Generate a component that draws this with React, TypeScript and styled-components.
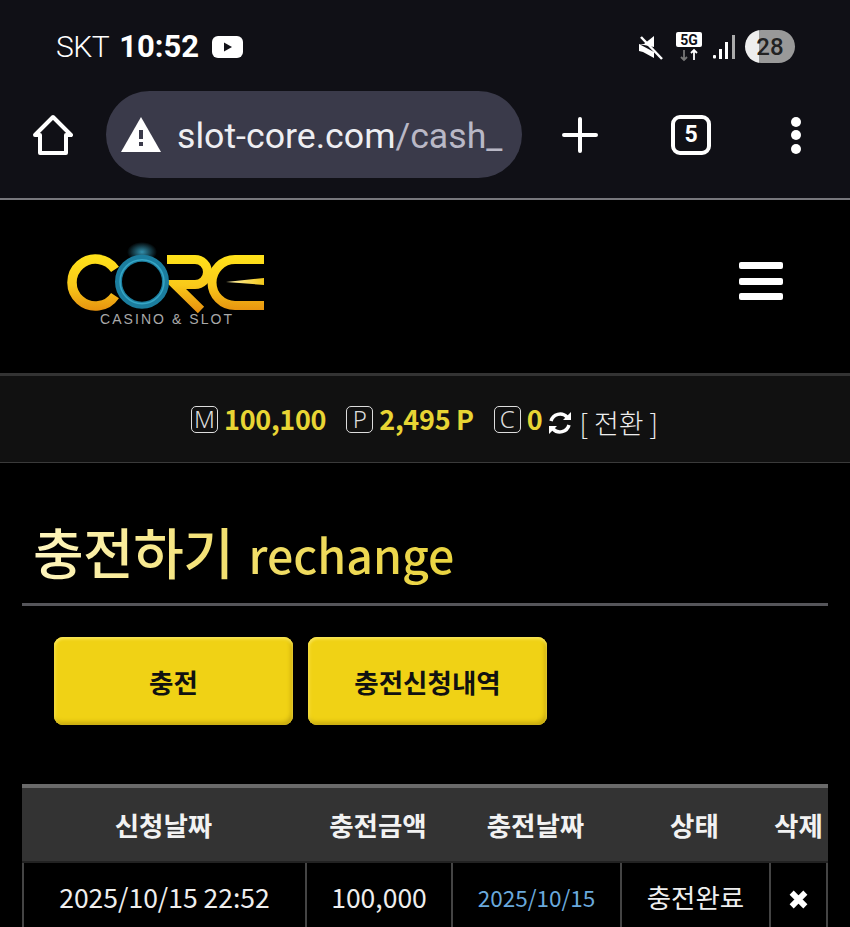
import React from 'react';
import styled, {createGlobalStyle} from 'styled-components';

const GlobalStyle = createGlobalStyle`
  html, body {
    margin: 0;
    padding: 0;
    background: #000;
  }
  body {
    font-family: "Noto Sans CJK KR", "Noto Sans", sans-serif;
  }
`;

const Page = styled.div`
  width: 850px;
  height: 927px;
  overflow: hidden;
  background: #000;
  color: #fff;
`;

const Chrome = styled.div`
  height: 198px;
  background: #101016;
  border-bottom: 2px solid #77777c;
`;

const StatusBar = styled.div`
  height: 91px;
  box-sizing: border-box;
  padding: 2px 55px 0 56px;
  display: flex;
  align-items: center;
  font-family: Roboto, sans-serif;
`;

const Carrier = styled.span`
  font-size: 30px;
  font-weight: 300;
  letter-spacing: -0.5px;
  margin-right: 10px;
`;

const Clock = styled.span`
  font-size: 31px;
  font-weight: 700;
  margin-right: 13px;
`;

const StatusRight = styled.div`
  margin-left: auto;
  display: flex;
  align-items: center;
`;

const Battery = styled.span`
  width: 50px;
  height: 33px;
  margin-left: 10px;
  border-radius: 17px;
  background: linear-gradient(90deg, #eee 0 29%, #999 29% 100%);
  color: #222;
  font-size: 24px;
  font-weight: 500;
  display: flex;
  align-items: center;
  justify-content: center;
  box-sizing: border-box;
`;

const Toolbar = styled.div`
  height: 87px;
  padding: 0 33px;
  display: flex;
  align-items: center;
`;

const UrlPill = styled.div`
  width: 416px;
  height: 87px;
  margin: 0 40px 0 33px;
  box-sizing: border-box;
  padding: 0 15px;
  border-radius: 44px;
  background: #3a3a4a;
  display: flex;
  align-items: center;
  gap: 16px;
  font-family: Roboto, sans-serif;
  font-size: 35.7px;
  color: #eeeef2;
  white-space: nowrap;
  overflow: hidden;
`;

const UrlText = styled.span`
  padding-top: 3px;
`;

const UrlDim = styled.span`
  color: #b9b8c6;
`;

const TabCount = styled.span`
  width: 40px;
  height: 40px;
  margin-left: 73px;
  box-sizing: border-box;
  border: 4px solid #fff;
  border-radius: 9px;
  display: flex;
  align-items: center;
  justify-content: center;
  font-family: Roboto, sans-serif;
  font-size: 23px;
  font-weight: 700;
`;

const MenuDots = styled.span`
  margin: 1px 0 0 80px;
  display: flex;
  flex-direction: column;
  gap: 3.500px;
  i {
    width: 10px;
    height: 10px;
    border-radius: 50%;
    background: #fff;
  }
`;

const SiteHeader = styled.header`
  height: 173px;
  box-sizing: border-box;
  padding: 40px 67px 0 60px;
  display: flex;
  justify-content: space-between;
`;

const Logo = styled.div`
  width: 220px;
  height: 92px;
  position: relative;
`;

const LogoCaption = styled.span`
  position: absolute;
  left: 40px;
  top: 71px;
  font-family: "Liberation Sans", sans-serif;
  font-size: 14px;
  line-height: 17px;
  letter-spacing: 2.050px;
  color: #a9a9a9;
  white-space: nowrap;
`;

const Hamburger = styled.div`
  width: 44px;
  margin-top: 22px;
  height: 38px;
  display: flex;
  flex-direction: column;
  justify-content: space-between;
  i {
    height: 7px;
    border-radius: 2px;
    background: #fff;
  }
`;

const InfoBar = styled.div`
  height: 90px;
  box-sizing: border-box;
  background: #111;
  border-top: 3px solid #333;
  border-bottom: 1px solid #3a3a3a;
  padding: 0 0 0 191px;
  display: flex;
  align-items: center;
`;

const Badge = styled.span`
  width: 27px;
  height: 27px;
  box-sizing: border-box;
  border: 1px solid #ddd;
  border-radius: 5px;
  display: flex;
  align-items: center;
  justify-content: center;
  margin: 0 6px 0 0;
  font-family: "Noto Sans", sans-serif;
  font-size: 24px;
  line-height: 1;
  font-weight: 300;
  color: #ddd;
`;

const Amount = styled.span<{$gap: number}>`
  color: #e8d534;
  font-size: 27px;
  font-weight: 700;
  line-height: 1;
  margin: -2px ${p => p.$gap}px 0 0;
  letter-spacing: -0.3px;
`;

const SwitchLabel = styled.span`
  margin: 6px 0 0 7px;
  font-size: 27px;
  font-weight: 300;
  line-height: 1;
  color: #eee;
  white-space: pre;
`;

const Main = styled.main`
  padding: 0 22px;
`;

const TitleRow = styled.h1`
  margin: 0;
  height: 143px;
  box-sizing: border-box;
  padding: 52px 0 0 11px;
  border-bottom: 3px solid #55555a;
  font-weight: 400;
  line-height: 1.3;
  white-space: nowrap;
`;

const TitleText = styled.span`
  display: inline-block;
  background: linear-gradient(90deg, #fff6c0 0%, #f3e070 45%, #e9d33f 100%);
  -webkit-background-clip: text;
  background-clip: text;
  color: transparent;
`;

const TitleKo = styled.span`
  font-size: 55px;
  font-weight: 500;
  letter-spacing: -0.5px;
`;

const TitleEn = styled.span`
  margin-left: 15px;
  font-size: 46.500px;
  font-weight: 500;
`;

const ButtonRow = styled.div`
  padding: 31px 32px 0;
  display: flex;
  gap: 15px;
`;

const ActionButton = styled.button`
  width: 239px;
  height: 88px;
  padding: 0;
  border: none;
  border-radius: 9px;
  background: #f0d215;
  box-shadow: inset 0 2px 3px #f9e65a, inset -2px -3px 4px #c6a90f, inset 2px 0 3px #f5dc35;
  color: #111;
  font-family: inherit;
  font-size: 26.500px;
  font-weight: 700;
`;

const RechargeTable = styled.table`
  width: 806px;
  margin-top: 59px;
  border-collapse: separate;
  border-spacing: 0;
  table-layout: fixed;
  border-top: 4px solid #6a6a6a;
`;

const HeadCell = styled.th`
  height: 73px;
  padding: 0;
  background: #333;
  border-bottom: 2px solid #222;
  font-size: 26.500px;
  font-weight: 700;
  color: #f2f2f2;
  white-space: nowrap;
`;

const BodyCell = styled.td<{$tone?: string; $size?: number}>`
  height: 72px;
  box-sizing: border-box;
  padding: 15px 0 0;
  vertical-align: top;
  text-align: center;
  font-size: ${p => p.$size || 26.5}px;
  line-height: 38px;
  font-weight: 400;
  color: ${p => p.$tone || '#eee'};
  border-left: 2px solid #444;
  white-space: nowrap;
  &:last-child {
    border-right: 2px solid #444;
  }
`;

const columns = [
    {title: '신청날짜', width: 283},
    {title: '충전금액', width: 146},
    {title: '충전날짜', width: 169},
    {title: '상태', width: 149},
    {title: '삭제', width: 59},
];

const HomeIcon = () => (
    <svg width="40" height="42" viewBox="0 0 40 42" fill="none" stroke="#fff" strokeWidth="4" strokeLinejoin="round">
        <path d="M2 21 20 3l18 18h-5v18H7V21z"/>
    </svg>
);

const WarnIcon = () => (
    <svg width="40" height="35" viewBox="0 0 40 35" style={{flexShrink: 0}}>
        <path d="M20 0 40 35H0z" fill="#fff"/>
        <rect x="18" y="13" width="4" height="9" fill="#3a3a4a"/>
        <rect x="18" y="25" width="4" height="4" fill="#3a3a4a"/>
    </svg>
);

const LogoMark = () => (
    <svg width="220" height="92" viewBox="0 0 220 92" fill="none">
        <defs>
            <linearGradient id="gold" gradientUnits="userSpaceOnUse" x1="0" y1="15" x2="0" y2="70">
                <stop offset="0" stopColor="#ffe21a"/>
                <stop offset="0.55" stopColor="#f8c91a"/>
                <stop offset="1" stopColor="#e8940f"/>
            </linearGradient>
            <linearGradient id="spike" x1="0" y1="0" x2="1" y2="0">
                <stop offset="0" stopColor="#fff3b0"/>
                <stop offset="1" stopColor="#f2c81a"/>
            </linearGradient>
            <radialGradient id="flare">
                <stop offset="0" stopColor="#3fb4d8" stopOpacity="0.8"/>
                <stop offset="1" stopColor="#3fb4d8" stopOpacity="0"/>
            </radialGradient>
        </defs>
        <ellipse cx="82" cy="12" rx="15" ry="10" fill="url(#flare)"/>
        <path d="M55 29.400A23.500 23.500 0 1 0 55 55.600" stroke="url(#gold)" strokeWidth="9.500"/>
        <path d="M107 19.500H135a12.500 12.500 0 0 1 0 25H115L141 70" stroke="url(#gold)" strokeWidth="9"/>
        <path d="M204 19.500H175a23 23 0 0 0 0 46H204" stroke="url(#gold)" strokeWidth="9"/>
        <path d="M204 38v7l-38-3z" fill="url(#spike)"/>
        <circle cx="82" cy="41.700" r="23.500" stroke="#1b7d9e" strokeWidth="7"/>
        <circle cx="82" cy="41.700" r="22" stroke="#36a6c6" strokeWidth="1.500"/>
    </svg>
);

const YoutubeIcon = () => (
    <svg width="31" height="22" viewBox="0 0 31 22">
        <rect width="31" height="22" rx="6" fill="#fff"/>
        <path d="M12 6.500 20 11l-8 4.500z" fill="#111118"/>
    </svg>
);

const MuteIcon = () => (
    <svg width="24" height="26" viewBox="0 0 24 26" fill="#fff" style={{marginRight: 13}}>
        <path d="M0 10h5l10-8v11zM0 10v7l4 1 11 6V18z"/>
        <path d="M2 3 23 25" stroke="#fff" strokeWidth="2.500"/>
    </svg>
);

const NetworkIcon = () => (
    <svg width="27" height="30" viewBox="0 0 27 30" style={{marginRight: 10}}>
        <rect width="26" height="15" rx="2" fill="#fff"/>
        <text x="13" y="12.500" textAnchor="middle" fontFamily="Roboto, sans-serif" fontWeight="700" fontSize="14" fill="#111118">5G</text>
        <path d="M8 18v10M5 25l3 3 3-3" stroke="#777" strokeWidth="1.800" fill="none"/>
        <path d="M18 28V18M15 21l3-3 3 3" stroke="#fff" strokeWidth="1.800" fill="none"/>
    </svg>
);

const SignalIcon = () => (
    <svg width="22" height="24" viewBox="0 0 22 24" fill="#fff">
        <rect x="0" y="20" width="3" height="3.500" rx="1"/>
        <rect x="6" y="14" width="3" height="10"/>
        <rect x="12" y="7" width="3" height="17"/>
        <rect x="19" y="0" width="3" height="24" fill="#aaa"/>
    </svg>
);

const PlusIcon = () => (
    <svg width="36" height="36" viewBox="0 0 36 36" stroke="#fff" strokeWidth="4" strokeLinecap="round">
        <path d="M18 2v32M2 18h32"/>
    </svg>
);

const RefreshIcon = () => (
    <svg width="24" height="24" viewBox="0 0 24 24" fill="none" stroke="#fff" strokeWidth="3.500" style={{marginTop: 8}}>
        <path d="M3 10a9.500 9.500 0 0 1 16-4"/>
        <path d="M21 14a9.500 9.500 0 0 1-16 4"/>
        <path d="M23 1v8h-8z" fill="#fff" stroke="none"/>
        <path d="M1 23v-8h8z" fill="#fff" stroke="none"/>
    </svg>
);

const CloseIcon = () => (
    <svg width="19" height="19" viewBox="0 0 18 18" stroke="#fff" strokeWidth="5.500" style={{display: 'block', margin: '12px auto 0'}}>
        <path d="M2.500 2.500l13 13M15.500 2.500l-13 13"/>
    </svg>
);

export default function App() {
    return (
        <Page>
            <GlobalStyle/>
            <Chrome>
                <StatusBar>
                    <Carrier>SKT</Carrier>
                    <Clock>10:52</Clock>
                    <YoutubeIcon/>
                    <StatusRight>
                        <MuteIcon/>
                        <NetworkIcon/>
                        <SignalIcon/>
                        <Battery>28</Battery>
                    </StatusRight>
                </StatusBar>
                <Toolbar>
                    <HomeIcon/>
                    <UrlPill>
                        <WarnIcon/>
                        <UrlText>slot-core.com<UrlDim>/cash_</UrlDim></UrlText>
                    </UrlPill>
                    <PlusIcon/>
                    <TabCount>5</TabCount>
                    <MenuDots><i/><i/><i/></MenuDots>
                </Toolbar>
            </Chrome>
            <SiteHeader>
                <Logo>
                    <LogoMark/>
                    <LogoCaption>CASINO &amp; SLOT</LogoCaption>
                </Logo>
                <Hamburger><i/><i/><i/></Hamburger>
            </SiteHeader>
            <InfoBar>
                <Badge>M</Badge>
                <Amount $gap={20}>100,100</Amount>
                <Badge>P</Badge>
                <Amount $gap={20}>2,495 P</Amount>
                <Badge>C</Badge>
                <Amount $gap={6}>0</Amount>
                <RefreshIcon/>
                <SwitchLabel>[ 전환 ]</SwitchLabel>
            </InfoBar>
            <Main>
                <TitleRow>
                    <TitleText>
                        <TitleKo>충전하기</TitleKo>
                        <TitleEn>rechange</TitleEn>
                    </TitleText>
                </TitleRow>
                <ButtonRow>
                    <ActionButton>충전</ActionButton>
                    <ActionButton>충전신청내역</ActionButton>
                </ButtonRow>
                <RechargeTable>
                    <colgroup>
                        {columns.map(col => <col key={col.title} width={col.width}/>)}
                    </colgroup>
                    <thead>
                        <tr>
                            {columns.map(col => <HeadCell key={col.title}>{col.title}</HeadCell>)}
                        </tr>
                    </thead>
                    <tbody>
                        <tr>
                            <BodyCell>2025/10/15 22:52</BodyCell>
                            <BodyCell>100,000</BodyCell>
                            <BodyCell $tone="#6aa9dc" $size={22.5}>2025/10/15</BodyCell>
                            <BodyCell>충전완료</BodyCell>
                            <BodyCell><CloseIcon/></BodyCell>
                        </tr>
                    </tbody>
                </RechargeTable>
            </Main>
        </Page>
    );
}
